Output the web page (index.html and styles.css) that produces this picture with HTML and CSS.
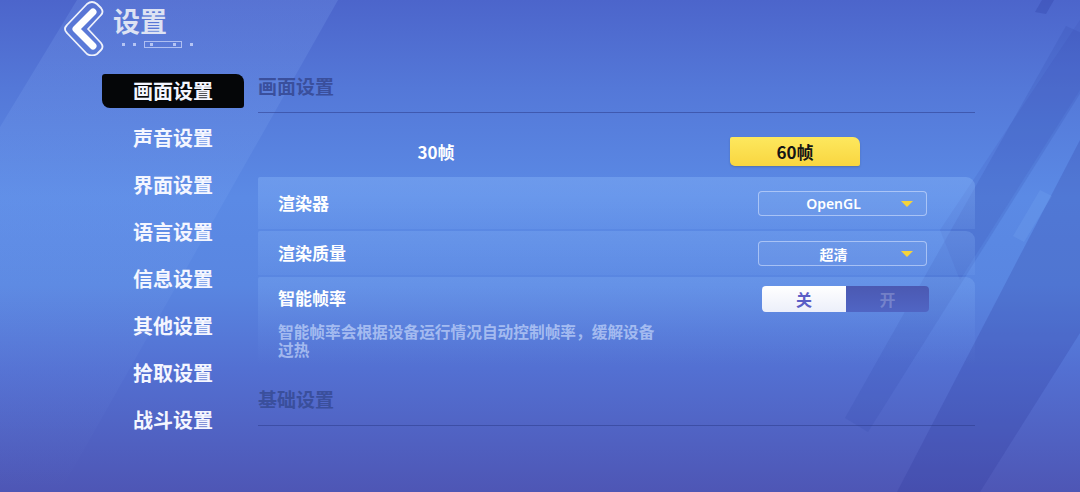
FILE: index.html
```html
<!DOCTYPE html>
<html lang="zh">
<head>
<meta charset="utf-8">
<title>设置</title>
<link rel="stylesheet" href="styles.css">
</head>
<body>
<div class="screen">
  <div class="deco band-light"></div>
  <div class="deco band-a"></div>
  <div class="deco band-a2"></div>
  <div class="deco band-b"></div>
  <div class="deco band-c"></div>
  <div class="deco band-top"></div>

  <header class="top">
    <svg class="back" viewBox="0 0 46 56" width="46" height="56" aria-hidden="true">
      <path d="M27 4 Q32 0 37 4 L41 8 Q44 12 41 15 L28 29 L41 43 Q44 47 41 50 L37 54 Q32 57 27 54 L7 33 Q3 29 7 25 Z" fill="none" stroke="#ffffff" stroke-width="1.8" stroke-opacity="0.9" stroke-linejoin="round"/>
      <polyline points="33,12 16,29 33,46" fill="none" stroke="#ffffff" stroke-width="7" stroke-linejoin="round" stroke-linecap="round"/>
    </svg>
    <div class="title-block">
      <div class="title">设置</div>
      <div class="marks">
        <span class="dot"></span><span class="dot"></span>
        <span class="frame"><span class="dot"></span><span class="dot"></span></span>
        <span class="dot"></span>
      </div>
    </div>
  </header>

  <div class="main">
    <nav class="nav">
      <div class="nav-item active">画面设置</div>
      <div class="nav-item">声音设置</div>
      <div class="nav-item">界面设置</div>
      <div class="nav-item">语言设置</div>
      <div class="nav-item">信息设置</div>
      <div class="nav-item">其他设置</div>
      <div class="nav-item">拾取设置</div>
      <div class="nav-item">战斗设置</div>
    </nav>

    <section class="content">
      <h2 class="section-head">画面设置</h2>

      <div class="fps">
        <div class="fps-opt">30帧</div>
        <div class="fps-opt selected">60帧</div>
      </div>

      <div class="row r1">
        <div class="label">渲染器</div>
        <div class="select"><span class="sel-text">OpenGL</span><span class="caret"></span></div>
      </div>
      <div class="row r2">
        <div class="label">渲染质量</div>
        <div class="select"><span class="sel-text">超清</span><span class="caret"></span></div>
      </div>
      <div class="row r3">
        <div class="r3-top">
          <div class="label">智能帧率</div>
          <div class="toggle">
            <span class="tg off-on">关</span>
            <span class="tg on-off">开</span>
          </div>
        </div>
        <p class="desc">智能帧率会根据设备运行情况自动控制帧率，缓解设备过热</p>
      </div>

      <h2 class="section-head second">基础设置</h2>
    </section>
  </div>
</div>
</body>
</html>
```

FILE: styles.css
```css
html, body {
  margin: 0;
  padding: 0;
}
body {
  width: 1080px;
  height: 492px;
  overflow: hidden;
  font-family: "Noto Sans CJK SC", "Noto Sans", sans-serif;
}
.screen {
  position: relative;
  width: 1080px;
  height: 492px;
  overflow: hidden;
  background: linear-gradient(180deg, #4c65cb 0%, #5478d8 18%, #5b8ae5 40%, #5986e1 58%, #5370d2 75%, #4e56b5 100%);
}

/* decorative diagonal bands of the backdrop */
.deco {
  position: absolute;
  left: 0;
  top: 0;
  width: 1080px;
  height: 492px;
  pointer-events: none;
}
.band-light {
  background: linear-gradient(180deg, rgba(150, 190, 255, 0.16) 0%, rgba(150, 190, 255, 0.08) 60%, rgba(150, 190, 255, 0) 100%);
  clip-path: polygon(77px 0, 338px 0, 60px 492px, 0 492px, 0 127px);
}
.band-a {
  background: rgba(45, 62, 165, 0.14);
  clip-path: polygon(845px 418px, 1066px 26px, 1110px 46px, 868px 432px);
}
.band-a2 {
  background: rgba(45, 62, 165, 0.1);
  clip-path: polygon(940px 230px, 1080px 20px, 1080px 90px, 960px 280px);
}
.band-b {
  background: rgba(40, 52, 150, 0.2);
  clip-path: polygon(897px 492px, 1080px 140px, 1080px 333px, 980px 492px);
}
.band-c {
  background: rgba(150, 200, 255, 0.12);
  clip-path: polygon(1013px 236px, 1040px 190px, 1052px 196px, 1024px 242px);
}
.band-top {
  background: rgba(45, 62, 165, 0.3);
  clip-path: polygon(1035px 12px, 1042px 0, 1054px 0, 1046px 14px);
}

/* Header */
.top {
  position: relative;
  display: flex;
  align-items: flex-start;
  height: 74px;
  padding-left: 60px;
  box-sizing: border-box;
}
.back {
  display: block;
}
.title-block {
  margin-left: 7px;
  padding-top: 4px;
}
.title {
  font-size: 27px;
  font-weight: 700;
  line-height: 34px;
  color: #dde2f3;
}
.marks {
  display: flex;
  align-items: center;
  gap: 8px;
  margin-top: 3px;
  margin-left: 9px;
}
.marks .dot {
  display: block;
  width: 3px;
  height: 3px;
  background: rgba(220, 228, 255, 0.7);
}
.marks .frame {
  display: flex;
  justify-content: space-between;
  align-items: center;
  width: 38px;
  height: 7px;
  box-sizing: border-box;
  padding: 0 5px;
  border: 1px solid rgba(220, 228, 255, 0.65);
}

/* Main */
.main {
  position: relative;
  display: flex;
  align-items: flex-start;
  padding-left: 102px;
}
.nav {
  display: flex;
  flex-direction: column;
  gap: 13px;
  width: 142px;
}
.nav-item {
  height: 34px;
  line-height: 34px;
  text-align: center;
  font-size: 20px;
  font-weight: 700;
  color: #f4f6ff;
  border-radius: 3px 8px 3px 8px;
}
.nav-item.active {
  background: #050608;
}

.content {
  width: 717px;
  margin-left: 14px;
}
.section-head {
  margin: 0;
  height: 38px;
  line-height: 24px;
  font-size: 19px;
  font-weight: 700;
  color: #3a4f9c;
  border-bottom: 1px solid rgba(45, 60, 140, 0.55);
}
.section-head.second {
  margin-top: 22px;
}

.fps {
  display: flex;
  align-items: center;
  height: 29px;
  margin-top: 24px;
  padding-left: 113px;
  gap: 229px;
  margin-bottom: 11px;
}
.fps-opt {
  width: 130px;
  height: 29px;
  line-height: 29px;
  text-align: center;
  font-size: 17px;
  font-weight: 700;
  color: #ffffff;
}
.fps-opt.selected {
  color: #151515;
  background: linear-gradient(180deg, #fde85e 0%, #f9d640 100%);
  border-radius: 2px 7px 2px 5px;
  box-shadow: 0 1px 2px rgba(60, 60, 20, 0.25);
}

.row {
  display: flex;
  align-items: center;
  justify-content: space-between;
  padding: 0 48px 0 20px;
  border-radius: 2px 9px 0 0;
  margin-bottom: 2px;
}
.r1 {
  height: 52px;
  background: linear-gradient(180deg, rgba(150, 195, 255, 0.32) 0%, rgba(140, 185, 255, 0.14) 100%);
}
.r2 {
  height: 44px;
  background: linear-gradient(180deg, rgba(150, 195, 255, 0.22) 0%, rgba(140, 185, 255, 0.1) 100%);
}
.r3 {
  display: block;
  height: 88px;
  padding: 9px 46px 0 20px;
  box-sizing: border-box;
  background: linear-gradient(180deg, rgba(150, 195, 255, 0.22) 0%, rgba(140, 185, 255, 0.08) 60%, rgba(140, 185, 255, 0) 100%);
}
.label {
  font-size: 17px;
  font-weight: 700;
  line-height: 24px;
  color: #ffffff;
}
.select {
  position: relative;
  width: 169px;
  height: 25px;
  box-sizing: border-box;
  border: 1px solid rgba(220, 232, 255, 0.55);
  border-radius: 4px;
  background: rgba(255, 255, 255, 0.04);
  display: flex;
  align-items: center;
  justify-content: center;
  margin-top: 1px;
}
.sel-text {
  font-family: "Noto Sans", "Noto Sans CJK SC", sans-serif;
  font-size: 14px;
  font-weight: 600;
  color: #ffffff;
  margin-right: 18px;
}
.caret {
  position: absolute;
  right: 13px;
  top: 9px;
  width: 0;
  height: 0;
  border-left: 6px solid transparent;
  border-right: 6px solid transparent;
  border-top: 6px solid #f5d43a;
}
.r3-top {
  display: flex;
  justify-content: space-between;
  align-items: flex-start;
}
.toggle {
  display: flex;
  width: 167px;
  height: 26px;
  border-radius: 4px;
  overflow: hidden;
}
.tg {
  flex: 1;
  text-align: center;
  line-height: 26px;
  font-size: 16px;
  font-weight: 700;
}
.off-on {
  flex: 0 0 84px;
  background: linear-gradient(180deg, #ffffff 0%, #eceffa 100%);
  color: #5a5ec6;
}
.on-off {
  background: linear-gradient(180deg, #4b59b2 0%, #5065c4 100%);
  color: rgba(255, 255, 255, 0.22);
}
.desc {
  margin: 11px 0 0;
  width: 392px;
  font-size: 15.7px;
  line-height: 18px;
  font-weight: 700;
  color: rgba(215, 228, 255, 0.62);
}
```
